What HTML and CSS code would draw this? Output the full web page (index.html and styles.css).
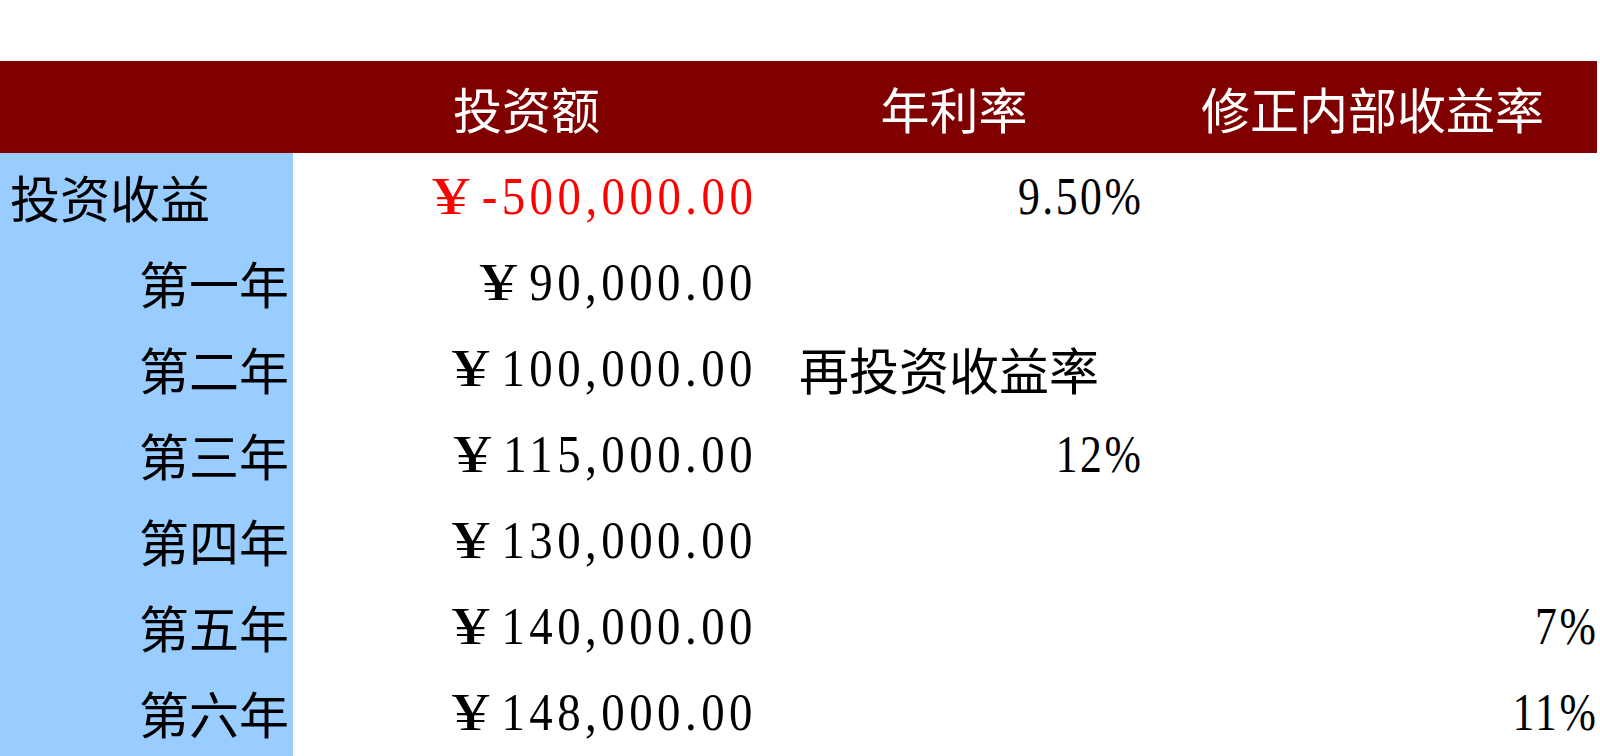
FILE: index.html
```html
<!DOCTYPE html>
<html lang="zh-CN">
<head>
<meta charset="utf-8">
<title>投资收益</title>
<link rel="stylesheet" href="styles.css">
</head>
<body>
<div class="sheet">
  <div class="top-gap"></div>
  <div class="grid">
    <div class="hd"></div>
    <div class="hd center">投资额</div>
    <div class="hd center">年利率</div>
    <div class="hd center">修正内部收益率</div>

    <div class="lbl left">投资收益</div>
    <div class="cell red"><span class="v"><span class="cur">¥</span>-500,000.00</span></div>
    <div class="cell"><span class="v pct">9.50%</span></div>
    <div class="cell numd"></div>

    <div class="lbl">第一年</div>
    <div class="cell"><span class="v"><span class="cur">¥</span>90,000.00</span></div>
    <div class="cell"></div>
    <div class="cell numd"></div>

    <div class="lbl">第二年</div>
    <div class="cell"><span class="v"><span class="cur">¥</span>100,000.00</span></div>
    <div class="cell text">再投资收益率</div>
    <div class="cell numd"></div>

    <div class="lbl">第三年</div>
    <div class="cell"><span class="v"><span class="cur">¥</span>115,000.00</span></div>
    <div class="cell"><span class="v pct">12%</span></div>
    <div class="cell numd"></div>

    <div class="lbl">第四年</div>
    <div class="cell"><span class="v"><span class="cur">¥</span>130,000.00</span></div>
    <div class="cell"></div>
    <div class="cell numd"></div>

    <div class="lbl">第五年</div>
    <div class="cell"><span class="v"><span class="cur">¥</span>140,000.00</span></div>
    <div class="cell"></div>
    <div class="cell numd"><span class="v pct">7%</span></div>

    <div class="lbl">第六年</div>
    <div class="cell"><span class="v"><span class="cur">¥</span>148,000.00</span></div>
    <div class="cell"></div>
    <div class="cell numd"><span class="v pct">11%</span></div>

    <div class="lbl"></div>
    <div class="cell"></div>
    <div class="cell"></div>
    <div class="cell"></div>
  </div>
</div>
</body>
</html>
```

FILE: styles.css
```css
html, body {
  margin: 0;
  padding: 0;
  background: #ffffff;
  overflow: hidden;
}

.sheet {
  width: 1600px;
  height: 756px;
  font-family: "Liberation Serif", "Noto Sans CJK SC", serif;
  font-size: 50px;
  color: #000000;
}

.top-gap {
  height: 61px;
}

.grid {
  display: grid;
  grid-template-columns: 293px 467px 388px 449px;
  grid-template-rows: 92px repeat(7, 86px) 20px;
}

.hd {
  background: #800000;
  color: #ffffff;
  display: flex;
  align-items: center;
  font-family: "Noto Sans CJK SC", sans-serif;
  font-size: 49px;
}

.center {
  justify-content: center;
}

.lbl {
  background: #99ccff;
  display: flex;
  align-items: center;
  justify-content: flex-end;
  padding-right: 4px;
  font-family: "Noto Sans CJK SC", sans-serif;
  font-size: 50px;
}

.lbl.left {
  justify-content: flex-start;
  padding-left: 10px;
  padding-right: 0;
}

.cell {
  display: flex;
  align-items: center;
  justify-content: flex-end;
  padding-right: 8px;
}

.numd {
  padding-right: 2px;
}

.v {
  display: inline-block;
  font-family: "Liberation Serif", serif;
  font-size: 52px;
  letter-spacing: 5px;
  margin-right: -5px;
  white-space: nowrap;
  transform: scaleX(0.9);
  transform-origin: right center;
}

.v.pct {
  letter-spacing: 3px;
  margin-right: -3px;
  transform: scaleX(0.84);
}

.red {
  color: #ff0000;
}

.cur {
  display: inline-block;
  width: 55px;
  transform: scaleX(1.6);
  transform-origin: left center;
}

.text {
  justify-content: flex-start;
  padding-left: 39px;
  font-family: "Noto Sans CJK SC", sans-serif;
  font-size: 50px;
}
```
